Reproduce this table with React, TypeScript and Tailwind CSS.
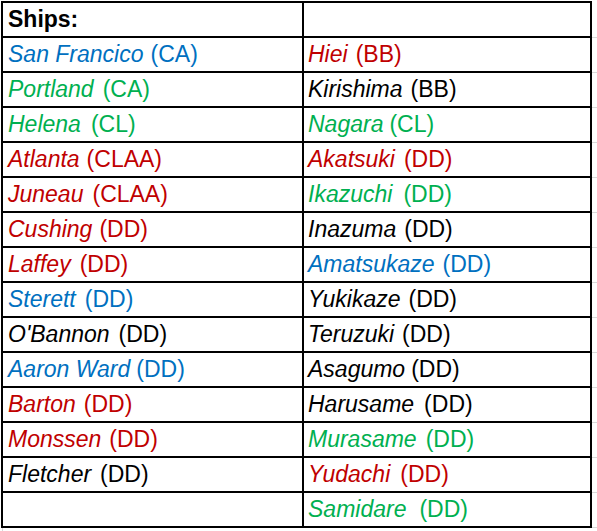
import React from "react";

type Ship = { name: string; cls: string; color: string; gap?: number } | null;

const BLUE = "text-[#0070c0]";
const GREEN = "text-[#00b050]";
const RED = "text-[#c00000]";
const BLACK = "text-black";

const left: Ship[] = [
  { name: "San Francico", cls: "CA", color: BLUE, gap: 1 },
  { name: "Portland", cls: "CA", color: GREEN, gap: 3 },
  { name: "Helena", cls: "CL", color: GREEN, gap: 4 },
  { name: "Atlanta", cls: "CLAA", color: RED, gap: 1 },
  { name: "Juneau", cls: "CLAA", color: RED, gap: 3 },
  { name: "Cushing", cls: "DD", color: RED, gap: 1 },
  { name: "Laffey", cls: "DD", color: RED, gap: 3 },
  { name: "Sterett", cls: "DD", color: BLUE, gap: 3 },
  { name: "O'Bannon", cls: "DD", color: BLACK, gap: 3 },
  { name: "Aaron Ward", cls: "DD", color: BLUE, gap: 0 },
  { name: "Barton", cls: "DD", color: RED, gap: 2 },
  { name: "Monssen", cls: "DD", color: RED, gap: 2 },
  { name: "Fletcher", cls: "DD", color: BLACK, gap: 3 },
  null,
];

const right: Ship[] = [
  { name: "Hiei", cls: "BB", color: RED, gap: 2 },
  { name: "Kirishima", cls: "BB", color: BLACK, gap: 2 },
  { name: "Nagara", cls: "CL", color: GREEN, gap: 0 },
  { name: "Akatsuki", cls: "DD", color: RED, gap: 3 },
  { name: "Ikazuchi", cls: "DD", color: GREEN, gap: 5 },
  { name: "Inazuma", cls: "DD", color: BLACK, gap: 2 },
  { name: "Amatsukaze", cls: "DD", color: BLUE, gap: 2 },
  { name: "Yukikaze", cls: "DD", color: BLACK, gap: 2 },
  { name: "Teruzuki", cls: "DD", color: BLACK, gap: 2 },
  { name: "Asagumo", cls: "DD", color: BLACK, gap: 0 },
  { name: "Harusame", cls: "DD", color: BLACK, gap: 4 },
  { name: "Murasame", cls: "DD", color: GREEN, gap: 3 },
  { name: "Yudachi", cls: "DD", color: RED, gap: 4 },
  { name: "Samidare", cls: "DD", color: GREEN, gap: 7 },
];

function Cell({ ship, wide }: { ship: Ship; wide: boolean }) {
  return (
    <div
      className={`${wide ? "w-[301px] pl-[5px]" : "w-[288px] pl-[4px]"} h-[35px] border-r-2 border-b-2 border-black flex items-center whitespace-nowrap`}
    >
      {ship && (
        <span className={`${ship.color} flex`}>
          <span className="italic">{ship.name}</span>
          <span style={{ marginLeft: 6 + (ship.gap ?? 0) }}>{"(" + ship.cls + ")"}</span>
        </span>
      )}
    </div>
  );
}

export default function App() {
  const rows = [];
  for (let i = 0; i < 14; i++) {
    rows.push(
      <div key={i} className="flex">
        <Cell ship={left[i]} wide />
        <Cell ship={right[i]} wide={false} />
      </div>
    );
  }
  return (
    <div
      className="w-[597px] h-[531px] bg-white relative overflow-hidden text-[23px] leading-none"
      style={{ fontFamily: '"Liberation Sans", Arial, sans-serif' }}
    >
      <div className="flex pt-[1px]">
        <div className="ml-[1px] border-l-2 border-t-2 border-black flex flex-col">
          <div className="flex">
            <div className="w-[301px] h-[35px] border-r-2 border-b-2 border-black flex items-center pl-[5px] font-bold">
              Ships:
            </div>
            <div className="w-[288px] h-[35px] border-r-2 border-b-2 border-black" />
          </div>
          {rows}
        </div>
        <div className="flex-1 flex flex-col pt-[2px]">
          {Array.from({ length: 15 }).map((_, i) => (
            <div key={i} className="h-[35px] border-b border-[#d9d9d9]" />
          ))}
        </div>
      </div>
      <div className="ml-[2px] w-px h-[10px] bg-[#d9d9d9]" />
    </div>
  );
}
